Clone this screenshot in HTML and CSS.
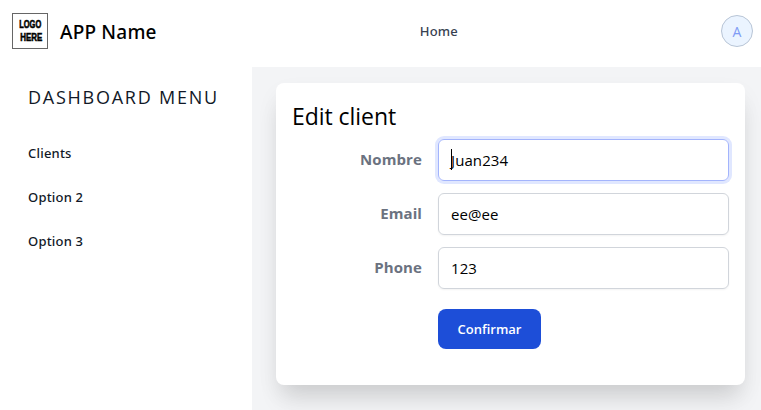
FILE: index.html
```html
<!DOCTYPE html>
<html lang="es">
<head>
<meta charset="utf-8">
<title>Edit client</title>
<link rel="stylesheet" href="styles.css">
</head>
<body>
<header class="navbar">
  <div class="brand">
    <div class="logo"><span>LOGO</span><span class="logo-second">HERE</span></div>
    <span class="brand-name">APP Name</span>
  </div>
  <nav><a class="nav-link">Home</a></nav>
  <div class="navbar-end"><span class="avatar">A</span></div>
</header>
<div class="layout">
  <aside class="sidebar">
    <h2 class="menu-title">DASHBOARD MENU</h2>
    <ul class="menu">
      <li>Clients</li>
      <li>Option 2</li>
      <li>Option 3</li>
    </ul>
  </aside>
  <main class="content">
    <section class="card">
      <h1 class="card-title">Edit client</h1>
      <form class="form">
        <label class="label">Nombre</label>
        <div class="field focused"><i class="caret"></i><span>Juan234</span></div>
        <label class="label">Email</label>
        <div class="field"><span>ee@ee</span></div>
        <label class="label">Phone</label>
        <div class="field"><span>123</span></div>
        <button class="submit" type="button">Confirmar</button>
      </form>
    </section>
  </main>
</div>
</body>
</html>
```
FILE: styles.css
```css
* { box-sizing: border-box; }
body {
  margin: 0;
  height: 410px;
  overflow: hidden;
  display: flex;
  flex-direction: column;
  background: #fff;
  color: #000;
  font-family: "Open Sans", "Noto Sans", sans-serif;
}
h1, h2, ul { margin: 0; padding: 0; font-weight: 400; list-style: none; }
.navbar {
  height: 67px;
  flex: none;
  display: flex;
  justify-content: space-between;
  align-items: flex-start;
  padding: 13px 8px 0 12px;
}
.brand { display: flex; align-items: center; gap: 12px; }
.logo {
  width: 36px;
  height: 36px;
  border: 1px solid #666;
  display: flex;
  flex-direction: column;
  align-items: center;
  justify-content: center;
  padding-bottom: 1px;
  font: 700 11px/13px "Liberation Sans", sans-serif;
  -webkit-text-stroke: .6px #000;
}
.logo span { height: 13px; transform: scaleX(.68); }
.logo .logo-second { transform: translateX(1px) scaleX(.72); }
.brand-name { font-family: "Noto Sans", sans-serif; font-size: 19px; font-weight: 500; line-height: 28px; letter-spacing: .2px; padding-top: 1px; }
.nav-link { display: block; font-family: "Noto Sans", sans-serif; font-size: 13px; font-weight: 500; line-height: 20px; letter-spacing: .2px; color: #374151; padding-top: 8px; }
.navbar-end { display: flex; justify-content: flex-end; padding-top: 2px; }
.avatar {
  width: 32px;
  height: 32px;
  border: 1px solid #b8c5d6;
  border-radius: 50%;
  background: #ebf4ff;
  color: #7f9cf5;
  font-size: 14px;
  line-height: 31px;
  text-align: center;
}
.layout { flex: 1; display: flex; min-height: 0; }
.sidebar { width: 252px; padding: 16px 28px; color: #111827; }
.menu-title { font-size: 18px; line-height: 28px; letter-spacing: 1.75px; white-space: nowrap; }
.menu { padding-top: 20px; }
.menu li { height: 44px; line-height: 44px; font-family: "Noto Sans", sans-serif; font-size: 13px; font-weight: 500; letter-spacing: .2px; }
.content { flex: 1; background: #f3f4f6; padding: 16px 16px 0 24px; }
.card {
  height: 302px;
  background: #fff;
  border-radius: 8px;
  padding: 16px;
  box-shadow: 0 20px 25px -5px rgba(0,0,0,.09), 0 10px 25px -5px rgba(0,0,0,.1);
}
.card-title { font-size: 23px; line-height: 35px; height: 40px; letter-spacing: -.05px; }
.form { display: grid; grid-template-columns: 130px 291px; column-gap: 16px; row-gap: 12px; }
.label { text-align: right; font-size: 15px; font-weight: 700; line-height: 40px; letter-spacing: .1px; color: #6b7280; }
.field {
  position: relative;
  height: 42px;
  border: 1px solid #d1d5db;
  border-radius: 6px;
  padding: 0 12px;
  line-height: 41px;
  font-size: 15px;
  letter-spacing: .1px;
  box-shadow: 0 1px 2px rgba(0,0,0,.05);
}
.focused { border-color: #a3b4fc; box-shadow: 0 0 0 3px #e0e7ff; }
.caret { position: absolute; left: 12px; top: 9px; width: 1px; height: 21px; background: #000; }
.submit {
  grid-column: 2;
  width: 103px;
  height: 40px;
  margin: 8px 0 0;
  padding: 0;
  border: 0;
  border-radius: 8px;
  background: #1d4ed8;
  color: #fff;
  font: 600 13px/20px "Open Sans", "Noto Sans", sans-serif;
}
```
